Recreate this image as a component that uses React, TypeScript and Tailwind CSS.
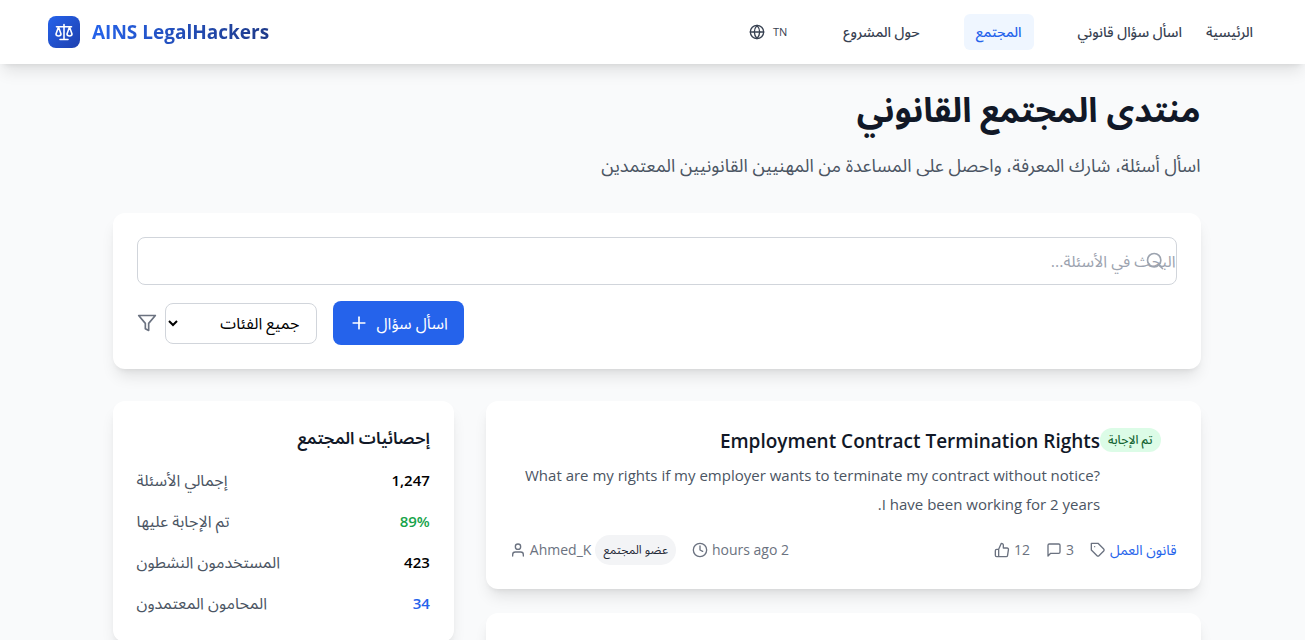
import React from 'react';
import { FiClock, FiFilter, FiGlobe, FiMessageSquare, FiPlus, FiSearch, FiTag, FiThumbsUp, FiUser } from 'react-icons/fi';

const navLink = 'flex h-9 items-center rounded-md px-3 text-sm font-medium';

const stats = [
  { label: 'إجمالي الأسئلة', value: '1,247', color: 'text-black' },
  { label: 'تم الإجابة عليها', value: '89%', color: 'text-[#16a34a]' },
  { label: 'المستخدمون النشطون', value: '423', color: 'text-black' },
  { label: 'المحامون المعتمدون', value: '34', color: 'text-[#2563eb]' },
];

const ScalesIcon = () => (
  <svg width="20" height="20" viewBox="0 0 20 20" fill="none" stroke="currentColor" strokeWidth="1.6" strokeLinecap="round" strokeLinejoin="round" aria-hidden="true">
    <path d="M10 2.5v15M6 17.5h8M2.5 4.8h15" />
    <path d="M4.5 5 2 12c0 2.6 5 2.6 5 0zM15.5 5 13 12c0 2.6 5 2.6 5 0z" />
  </svg>
);

const Header = () => (
  <header className="relative z-10 bg-white shadow-lg">
    <div dir="ltr" className="flex h-16 items-center justify-between px-12">
      <a href="#" className="flex items-center gap-3">
        <span className="flex size-8 items-center justify-center rounded-lg bg-linear-to-br from-[#2563eb] to-[#1e40af] text-white">
          <ScalesIcon />
        </span>
        <span className="bg-linear-to-r from-[#2563eb] to-[#1e3a8a] bg-clip-text text-[19px] font-bold text-transparent">AINS LegalHackers</span>
      </a>
      <nav className="flex items-center text-[#374151]">
        <button className="mr-11 flex items-center gap-2 text-[11px]">
          <FiGlobe size={16} />
          TN
        </button>
        <a href="#" className={navLink + ' mr-8'}>حول المشروع</a>
        <a href="#" className={navLink + ' mr-8 bg-[#eff6ff] text-[#2563eb]'}>المجتمع</a>
        <a href="#" className={navLink}>اسأل سؤال قانوني</a>
        <a href="#" className={navLink + ' -mr-2'}>الرئيسية</a>
      </nav>
    </div>
  </header>
);

const QuestionCard = () => (
  <article className="rounded-xl bg-white p-6 shadow-lg">
    <div className="flex items-start pr-4 pl-2">
      <span className="mt-[3px] flex h-6 items-center rounded-full bg-[#dcfce7] px-2 text-xs font-medium text-[#166534]">تم الإجابة</span>
      <div className="flex-1">
        <h3 className="text-[19px] leading-8 font-semibold text-[#111827]">Employment Contract Termination Rights</h3>
        <p className="mt-1 text-[15px] leading-[29px] text-[#4b5563]">
          What are my rights if my employer wants to terminate my contract without notice? I have been working for 2 years.
        </p>
      </div>
    </div>
    <div className="mt-4 flex items-center justify-between text-sm text-[#6b7280]">
      <div className="flex items-center gap-4">
        <span className="flex items-center gap-1">
          <a href="#" className="text-[#2563eb]">قانون العمل</a>
          <FiTag size={16} />
        </span>
        <span className="flex items-center gap-1">3 <FiMessageSquare size={16} /></span>
        <span className="flex items-center gap-1">12 <FiThumbsUp size={16} /></span>
      </div>
      <div className="flex items-center gap-4">
        <span className="flex items-center gap-1">2 hours ago <FiClock size={16} /></span>
        <span className="flex items-center gap-1">
          <span className="rounded-full bg-[#f3f4f6] px-2 text-xs leading-[30px] text-[#1f2937]">عضو المجتمع</span>
          Ahmed_K
          <FiUser size={16} />
        </span>
      </div>
    </div>
  </article>
);

export default function App() {
  return (
    <div dir="rtl" className="min-h-screen bg-[#f9fafb] font-['Open_Sans','Noto_Sans_Arabic',sans-serif]">
      <Header />
      <div className="pl-2">
        <main className="mx-auto max-w-6xl px-8 pt-6">
          <h1 className="text-[34px] leading-[42px] font-bold text-[#111827]">منتدى المجتمع القانوني</h1>
          <p className="mt-5 text-lg leading-[31px] text-[#4b5563]">
            اسأل أسئلة، شارك المعرفة، واحصل على المساعدة من المهنيين القانونيين المعتمدين
          </p>

          <section className="mt-8 rounded-xl bg-white p-6 shadow-lg">
            <div className="relative">
              <FiSearch size={20} className="absolute top-3.5 right-3 text-[#9ca3af]" />
              <input
                type="text"
                aria-label="البحث"
                placeholder="البحث في الأسئلة..."
                className="block h-12 w-full rounded-lg border border-[#d1d5db] placeholder:text-[#9ca3af]"
              />
            </div>
            <div className="mt-4 flex items-center justify-end gap-4">
              <button className="flex h-11 items-center gap-2 rounded-lg bg-[#2563eb] px-4 text-white">
                اسأل سؤال
                <FiPlus size={20} />
              </button>
              <div className="flex items-center gap-2">
                <select aria-label="الفئة" className="h-[41px] w-38 rounded-lg border border-[#d1d5db] bg-white px-3 text-black">
                  <option>جميع الفئات</option>
                </select>
                <FiFilter size={20} className="text-[#6b7280]" />
              </div>
            </div>
          </section>

          <div className="mt-8 grid grid-cols-3 items-start gap-8">
            <div className="col-span-2 space-y-6">
              <QuestionCard />
              {/* next question, still loading */}
              <div className="h-12 rounded-xl bg-white shadow-lg" />
            </div>
            <aside className="rounded-xl bg-white p-6 shadow-lg">
              <h2 className="text-[17px] leading-[25px] font-semibold text-[#111827]">إحصائيات المجتمع</h2>
              <dl className="mt-4 space-y-3 leading-[29px]">
                {stats.map((s) => (
                  <div key={s.label} className="flex justify-between">
                    <dd className={'text-[15px] font-semibold ' + s.color}>{s.value}</dd>
                    <dt className="text-[#4b5563]">{s.label}</dt>
                  </div>
                ))}
              </dl>
            </aside>
          </div>
        </main>
      </div>
    </div>
  );
}
